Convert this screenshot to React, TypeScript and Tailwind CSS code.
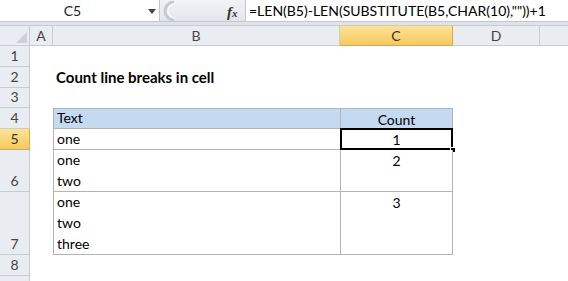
import React from 'react';

const font = { fontFamily: 'Lato, "Open Sans", sans-serif' };

const rows = [
  { n: 1, h: 'h-[21px]' },
  { n: 2, h: 'h-[21px]' },
  { n: 3, h: 'h-[20px]' },
  { n: 4, h: 'h-[21px]' },
  { n: 5, h: 'h-[21px]' },
  { n: 6, h: 'h-[42px]' },
  { n: 7, h: 'h-[63px]' },
  { n: 8, h: 'h-[21px]' },
  { n: 9, h: 'h-[21px]' },
];

function RowHeader({ n, active }: { n: number; active?: boolean }) {
  return (
    <div
      className={`w-[30px] shrink-0 flex items-end justify-center border-b border-r text-[14px] leading-[20px] ${
        active
          ? 'bg-gradient-to-b from-[#fbe29a] to-[#f6c95a] border-[#e3a73c] text-[#333]'
          : 'bg-[#e9ecf1] border-[#c7ccd3] text-[#444]'
      }`}
    >
      {n < 9 ? n : ''}
    </div>
  );
}

function TextCell({ lines, header, first }: { lines: string[]; header?: boolean; first?: boolean }) {
  return (
    <div
      className={`w-[287px] shrink-0 flex flex-col justify-end pl-[3px] border-l border-b border-[#b4b4b4] text-[14px] leading-[21px] text-black ${
        header ? 'bg-[#c5d9f1]' : 'bg-white'
      } ${first ? 'border-t' : ''}`}
    >
      {lines.map((l) => (
        <span key={l}>{l}</span>
      ))}
    </div>
  );
}

function CountCell({ value, header, first, selected }: { value: string; header?: boolean; first?: boolean; selected?: boolean }) {
  return (
    <div
      className={`relative w-[113px] shrink-0 text-center border-l border-r border-b border-[#b4b4b4] text-[14px] leading-[21px] text-black ${
        header ? 'bg-[#c5d9f1] leading-[20px]' : 'bg-white'
      } ${first ? 'border-t' : ''}`}
    >
      {value}
      {selected && (
        <>
          <div className="absolute -left-[1px] -top-[1px] -right-[1px] -bottom-[1px] border-2 border-black" />
          <div className="absolute -right-[4px] -bottom-[4px] w-[6px] h-[6px] bg-black border border-white" />
        </>
      )}
    </div>
  );
}

export default function App() {
  return (
    <div className="w-[568px] h-[281px] overflow-hidden bg-white select-none" style={font}>
      {/* Formula bar */}
      <div className="flex h-[22px] bg-[#dfe3e8] border-b border-[#c2c7cf]">
        <div className="w-[160px] flex items-center bg-white border-r border-[#c2c7cf] relative">
          <span className="w-[145px] text-center text-[14px] text-[#222]">C5</span>
          <svg className="absolute left-[148px] top-[9px]" width="8" height="5" viewBox="0 0 8 5">
            <path d="M0 0h8L4 5z" fill="#444" />
          </svg>
        </div>
        <div className="w-[86px] flex items-center relative bg-gradient-to-b from-[#f1f3f6] to-[#e2e6eb] border-r border-[#c2c7cf]">
          <svg className="absolute left-[2px] top-[1px]" width="14" height="20" viewBox="0 0 14 20">
            <path d="M12 1 A9 9 0 0 0 12 19" stroke="#c6cbd2" strokeWidth="3" fill="none" />
            <path d="M13 3 A7 7 0 0 0 13 17" stroke="#f8f9fb" strokeWidth="1.5" fill="none" />
          </svg>
          <span
            className="absolute left-[67px] top-[1px] text-[15px] italic font-bold text-[#333]"
            style={{ fontFamily: '"Liberation Serif", serif' }}
          >
            f<span className="text-[11px]">x</span>
          </span>
        </div>
        <div className="flex-1 bg-white flex items-center pl-[3px] text-[14px] text-black whitespace-nowrap">
          =LEN(B5)-LEN(SUBSTITUTE(B5,CHAR(10),""))+1
        </div>
      </div>
      <div className="h-[4px] bg-[#dfe3e8] border-b border-[#c7ccd3]" />

      {/* Column headers */}
      <div className="flex h-[20px] text-[14px] leading-[19px] text-[#444]">
        <div className="w-[30px] shrink-0 relative bg-[#e9ecf1] border-r border-b border-[#c7ccd3]">
          <svg className="absolute right-[2px] bottom-[2px]" width="11" height="11" viewBox="0 0 11 11">
            <path d="M11 0V11H0z" fill="#cdd1d7" />
          </svg>
        </div>
        <div className="w-[23px] shrink-0 text-center bg-[#e9ecf1] border-r border-b border-[#c7ccd3]">A</div>
        <div className="w-[287px] shrink-0 text-center bg-[#e9ecf1] border-r border-b border-[#c7ccd3]">B</div>
        <div className="w-[113px] shrink-0 text-center bg-gradient-to-b from-[#fbe29a] to-[#f6c95a] border-r border-b border-[#e3a73c] text-[#333]">
          C
        </div>
        <div className="w-[87px] shrink-0 text-center bg-[#e9ecf1] border-r border-b border-[#c7ccd3]">D</div>
        <div className="flex-1 bg-[#e9ecf1] border-b border-[#c7ccd3]" />
      </div>

      {/* Sheet rows */}
      {rows.map(({ n, h }) => (
        <div key={n} className={`flex ${h}`}>
          <RowHeader n={n} active={n === 5} />
          <div className="w-[23px] shrink-0" />
          {n === 2 && (
            <div className="pl-[3px] text-[15px] font-bold leading-[21px] text-black self-end">
              Count line breaks in cell
            </div>
          )}
          {n === 4 && (
            <>
              <TextCell lines={['Text']} header first />
              <CountCell value="Count" header first />
            </>
          )}
          {n === 5 && (
            <>
              <TextCell lines={['one']} />
              <CountCell value="1" selected />
            </>
          )}
          {n === 6 && (
            <>
              <TextCell lines={['one', 'two']} />
              <CountCell value="2" />
            </>
          )}
          {n === 7 && (
            <>
              <TextCell lines={['one', 'two', 'three']} />
              <CountCell value="3" />
            </>
          )}
        </div>
      ))}
    </div>
  );
}
